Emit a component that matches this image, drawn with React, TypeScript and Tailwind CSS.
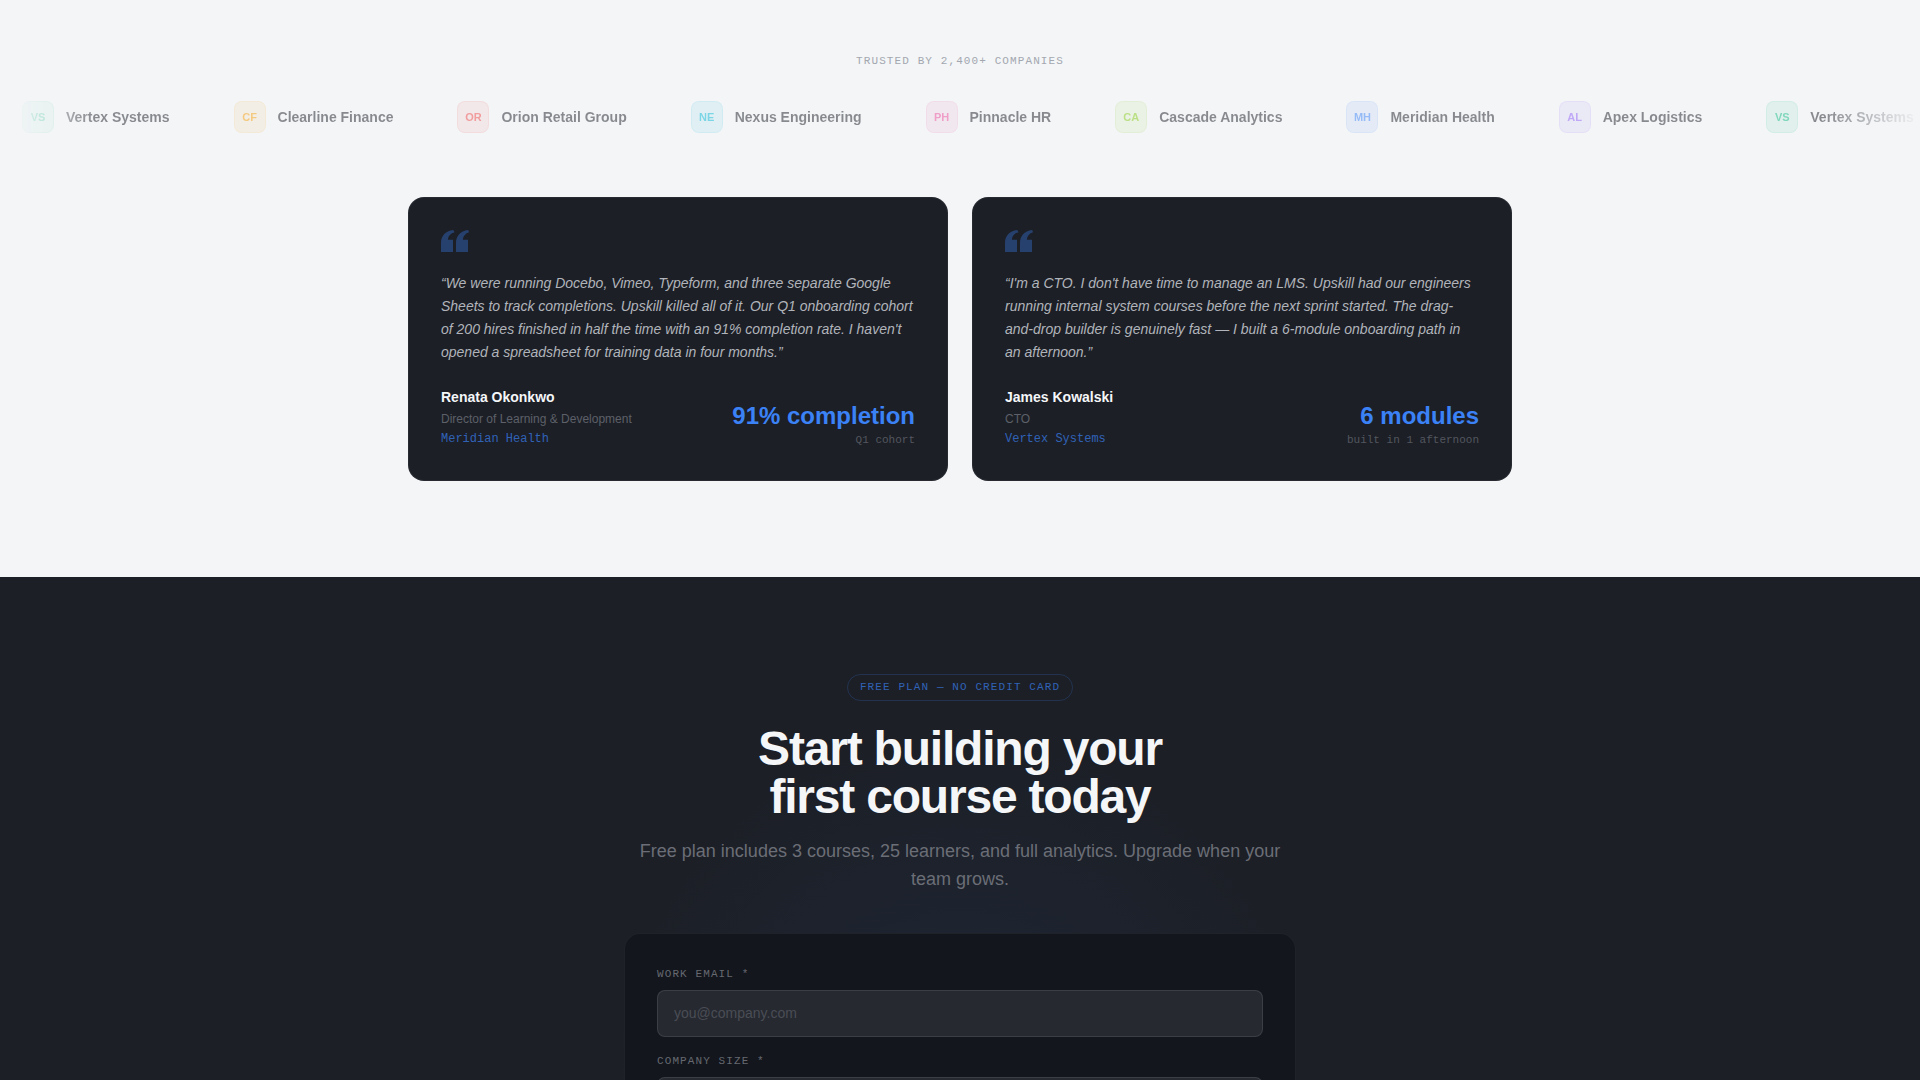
import { useState } from "react";

type Company = {
  name: string;
  initials: string;
  badge: string;
};

type Testimonial = {
  quote: string;
  name: string;
  role: string;
  company: string;
  stat: string;
  statLabel: string;
};

const companies: Company[] = [
  { name: "Vertex Systems", initials: "VS", badge: "text-[#10b981] bg-[#10b981]/15 border-[#10b981]/15" },
  { name: "Clearline Finance", initials: "CF", badge: "text-[#f59e0b] bg-[#f59e0b]/15 border-[#f59e0b]/15" },
  { name: "Orion Retail Group", initials: "OR", badge: "text-[#ef4444] bg-[#ef4444]/15 border-[#ef4444]/15" },
  { name: "Nexus Engineering", initials: "NE", badge: "text-[#06b6d4] bg-[#06b6d4]/15 border-[#06b6d4]/15" },
  { name: "Pinnacle HR", initials: "PH", badge: "text-[#ec4899] bg-[#ec4899]/15 border-[#ec4899]/15" },
  { name: "Cascade Analytics", initials: "CA", badge: "text-[#84cc16] bg-[#84cc16]/15 border-[#84cc16]/15" },
  { name: "Meridian Health", initials: "MH", badge: "text-[#3b82f6] bg-[#3b82f6]/15 border-[#3b82f6]/15" },
  { name: "Apex Logistics", initials: "AL", badge: "text-[#8b5cf6] bg-[#8b5cf6]/15 border-[#8b5cf6]/15" },
];

const testimonials: Testimonial[] = [
  {
    quote:
      "We were running Docebo, Vimeo, Typeform, and three separate Google Sheets to track completions. Upskill killed all of it. Our Q1 onboarding cohort of 200 hires finished in half the time with an 91% completion rate. I haven't opened a spreadsheet for training data in four months.",
    name: "Renata Okonkwo",
    role: "Director of Learning & Development",
    company: "Meridian Health",
    stat: "91% completion",
    statLabel: "Q1 cohort",
  },
  {
    quote:
      "I'm a CTO. I don't have time to manage an LMS. Upskill had our engineers running internal system courses before the next sprint started. The drag-and-drop builder is genuinely fast — I built a 6-module onboarding path in an afternoon.",
    name: "James Kowalski",
    role: "CTO",
    company: "Vertex Systems",
    stat: "6 modules",
    statLabel: "built in 1 afternoon",
  },
];

const companySizes = ["1–25", "26–100", "101–500", "500+"];

const LogoMarquee = () => (
  <ul className="flex gap-16 overflow-hidden pl-[22px] [mask-image:linear-gradient(to_right,transparent,black_5%,black_95%,transparent)]">
    {[...companies, companies[0]].map((company, i) => (
      <li key={i} className="flex shrink-0 items-center gap-3 opacity-50">
        <span
          className={`flex size-8 items-center justify-center rounded-lg border text-[11px] font-bold ${company.badge}`}
        >
          {company.initials}
        </span>
        <span className="text-sm font-bold whitespace-nowrap text-[#1c1f26]">{company.name}</span>
      </li>
    ))}
  </ul>
);

const TestimonialCard = ({ data }: { data: Testimonial }) => (
  <figure className="flex flex-col rounded-2xl border border-white/5 bg-[#1c1f26] p-8">
    <svg width="28" height="22" viewBox="0 0 28 22" className="mb-5 text-[#3b82f6]/35" fill="currentColor" aria-hidden="true">
      <path d="M0 22V13.2C0 6 4.2 1.2 12.2 0L13.6 2.2C9.6 3.2 7.2 5.8 6.8 9.8H12V22H0Z" />
      <path d="M15 22V13.2C15 6 19.2 1.2 27.2 0L28 2.2C24.6 3.2 22.2 5.8 21.8 9.8H27V22H15Z" />
    </svg>
    <blockquote className="mb-6 text-sm leading-[23px] text-[#b1b4ba] italic">{`“${data.quote}”`}</blockquote>
    <figcaption className="mt-auto flex items-end justify-between gap-4">
      <div className="leading-[18px]">
        <p className="text-[14px] font-bold text-[#f4f6f8]">{data.name}</p>
        <p className="mt-1 text-[12px] text-[#5d6068]">{data.role}</p>
        <p className="mt-0.5 font-['Liberation_Mono',monospace] text-[12px] text-[#3b82f6]/70">{data.company}</p>
      </div>
      <div className="text-right">
        <p className="text-2xl font-bold text-[#3b82f6]">{data.stat}</p>
        <p className="font-['Liberation_Mono',monospace] text-[11px] leading-4 text-[#53565e]">{data.statLabel}</p>
      </div>
    </figcaption>
  </figure>
);

const labelClass =
  "mb-2 block font-['Liberation_Mono',monospace] text-[11px] leading-4 tracking-widest text-[#666970] uppercase";
const fieldClass =
  "h-[47px] w-full rounded-lg border border-white/10 bg-[#262930] px-4 text-sm text-white outline-none placeholder:text-[#4a4d55]";

const SignupForm = () => {
  const [email, setEmail] = useState("");
  const [size, setSize] = useState("");

  return (
    <form
      className="rounded-2xl border border-white/5 bg-[#13161d] p-8 text-left"
      onSubmit={(e) => e.preventDefault()}
    >
      <div className="mb-4">
        <label htmlFor="email" className={labelClass}>
          Work email *
        </label>
        <input
          id="email"
          type="email"
          placeholder="you@company.com"
          value={email}
          onChange={(e) => setEmail(e.target.value)}
          className={fieldClass}
        />
      </div>
      <div>
        <label htmlFor="size" className={labelClass}>
          Company size *
        </label>
        <select id="size" value={size} onChange={(e) => setSize(e.target.value)} className={fieldClass}>
          <option value=""></option>
          {companySizes.map((s) => (
            <option key={s}>{s}</option>
          ))}
        </select>
      </div>
    </form>
  );
};

export default function App() {
  return (
    <main className="h-screen overflow-hidden bg-[#f3f5f7] font-['Liberation_Sans',Arial,sans-serif]">
      <section className="pt-[53px] pb-24">
        <p className="mb-8 text-center font-['Liberation_Mono',monospace] text-[11px] leading-4 tracking-widest text-[#a3a7af] uppercase">
          Trusted by 2,400+ companies
        </p>
        <LogoMarquee />
        <div className="mx-auto mt-16 grid max-w-6xl gap-6 px-6 md:grid-cols-2">
          {testimonials.map((t) => (
            <TestimonialCard key={t.name} data={t} />
          ))}
        </div>
      </section>

      <section className="bg-[#1c1f26] bg-[radial-gradient(circle_at_50%_500px,rgba(59,130,246,0.08),transparent_350px)] px-6 py-24">
        <div className="mx-auto max-w-2xl text-center">
          <span className="inline-block rounded-full border border-[#3b82f6]/20 px-3 py-1 font-['Liberation_Mono',monospace] text-[11px] tracking-widest text-[#3b82f6]/70 uppercase">
            Free plan — no credit card
          </span>
          <h2 className="mt-6 text-5xl leading-none font-bold tracking-tight text-[#f4f6f8]">
            Start building your
            <br />
            first course today
          </h2>
          <p className="mt-4 mb-10 text-lg leading-7 text-[#6b6e76]">
            Free plan includes 3 courses, 25 learners, and full analytics. Upgrade when your team grows.
          </p>
          <SignupForm />
        </div>
      </section>
    </main>
  );
}
